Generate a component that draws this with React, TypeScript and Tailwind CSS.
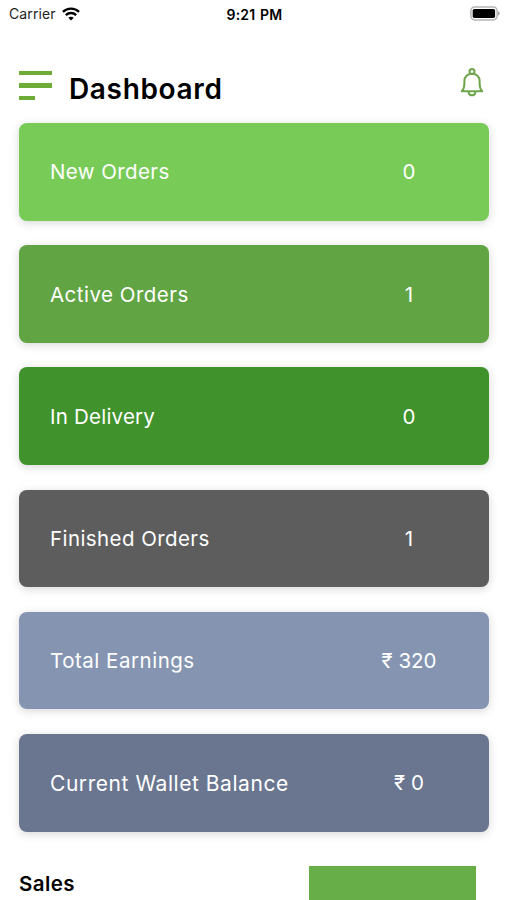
type Stat = {
  label: string
  value: string
  color: string
  text: string
}

const stats: Stat[] = [
  { label: 'New Orders', value: '0', color: 'bg-[#79cb58]', text: 'text-[20.5px] tracking-[0.4px]' },
  { label: 'Active Orders', value: '1', color: 'bg-[#61a444]', text: 'text-[20.5px] tracking-[0.48px]' },
  { label: 'In Delivery', value: '0', color: 'bg-[#40922d]', text: 'text-[20.5px] tracking-[0.22px]' },
  { label: 'Finished Orders', value: '1', color: 'bg-[#5d5d5d]', text: 'text-[20.5px] tracking-[0.42px]' },
  { label: 'Total Earnings', value: '₹ 320', color: 'bg-[#8595b1]', text: 'text-[20.5px] tracking-[0.52px]' },
  { label: 'Current Wallet Balance', value: '₹ 0', color: 'bg-[#6a7690]', text: 'text-[21px] tracking-[0.55px]' },
]

export default function App() {
  return (
    <div className="h-[900px] w-full overflow-hidden bg-white font-['Inter',sans-serif] text-black">
      <StatusBar />
      <Header />

      {/* Stat cards */}
      <main className="flex flex-col gap-[24.6px] pl-[19px] pr-[18px]">
        {stats.map(s => (
          <StatCard key={s.label} stat={s} />
        ))}
      </main>

      {/* Sales */}
      <section className="flex justify-between pt-[34px] pl-[19px] pr-[31px]">
        <h2 className="pt-[3px] text-[20.5px] leading-[30px] font-semibold tracking-[0.4px]">Sales</h2>
        <div className="h-[60px] w-[167px] bg-[#67ae48]" />
      </section>
    </div>
  )
}

function StatusBar() {
  return (
    <div className="grid h-[27px] grid-cols-3 items-center pl-[9px] pr-[7px]">
      <div className="flex items-center gap-[6px]">
        <span className="text-[14px] tracking-[0.1px] text-[#222]">Carrier</span>
        <WifiIcon />
      </div>
      <span className="pt-px text-center text-[14px] font-semibold tracking-[0.2px] whitespace-nowrap [word-spacing:1px]">
        9:21 PM
      </span>
      <div className="flex justify-end">
        <BatteryIcon />
      </div>
    </div>
  )
}

function Header() {
  return (
    <header className="flex h-[96px] items-start pl-[19px] pr-[23px]">
      <button className="mt-[44px] flex flex-col gap-[8px]" aria-label="Menu">
        <span className="h-[4.4px] w-[33px] bg-[#6cac37]" />
        <span className="h-[4.4px] w-[33px] bg-[#6cac37]" />
        <span className="h-[4.4px] w-[16px] bg-[#6cac37]" />
      </button>
      <h1 className="mt-[44px] ml-[17px] text-[28px] leading-[36px] font-semibold tracking-[0.65px]">Dashboard</h1>
      <button className="mt-[41px] ml-auto" aria-label="Notifications">
        <BellIcon />
      </button>
    </header>
  )
}

function StatCard({ stat }: { stat: Stat }) {
  return (
    <div
      className={`flex h-[97.6px] items-center justify-between rounded-[8px] pt-[2px] pl-[31px] text-white shadow-[0_2px_10px_rgba(0,0,0,0.16)] ${stat.color}`}
    >
      <span className={`whitespace-nowrap ${stat.text}`}>{stat.label}</span>
      <span className="w-[160px] text-center text-[20.5px]">{stat.value}</span>
    </div>
  )
}

function WifiIcon() {
  return (
    <svg width="18" height="14" viewBox="0 0 18 14" fill="none" stroke="#000" strokeWidth="2.3">
      <path d="M0.9 4.9C5.4 0.6 12.6 0.6 17.1 4.9" />
      <path d="M3.8 8.1C6.7 5.3 11.3 5.3 14.2 8.1" />
      <path d="M9 13.4L6.3 10.7C7.8 9.4 10.2 9.4 11.7 10.7Z" fill="#000" stroke="none" />
    </svg>
  )
}

function BatteryIcon() {
  return (
    <svg width="31" height="15" viewBox="0 0 31 15" fill="none">
      <rect x="1.9" y="0.9" width="26.2" height="13" rx="3.8" stroke="#b5b5b5" strokeWidth="1.5" />
      <rect x="3.7" y="2.9" width="22.4" height="9" rx="1.6" fill="#000" />
      <path d="M29.2 5.3C31.2 6.2 31.2 8.6 29.2 9.5Z" fill="#999" />
    </svg>
  )
}

function BellIcon() {
  return (
    <svg width="24" height="29" viewBox="0 0 24 29" fill="none" stroke="#6fa64b" strokeWidth="2" strokeLinejoin="round">
      <circle cx="12" cy="3.6" r="2.5" />
      <path d="M1.8 23.2C3.6 21.4 4.4 18.8 4.4 15.4V12.8C4.4 8.8 7.5 5.7 12 5.7S19.6 8.8 19.6 12.8V15.4C19.6 18.8 20.4 21.4 22.2 23.2Z" />
      <path d="M8.6 23.6C8.8 28.6 15.2 28.6 15.4 23.6" />
    </svg>
  )
}
